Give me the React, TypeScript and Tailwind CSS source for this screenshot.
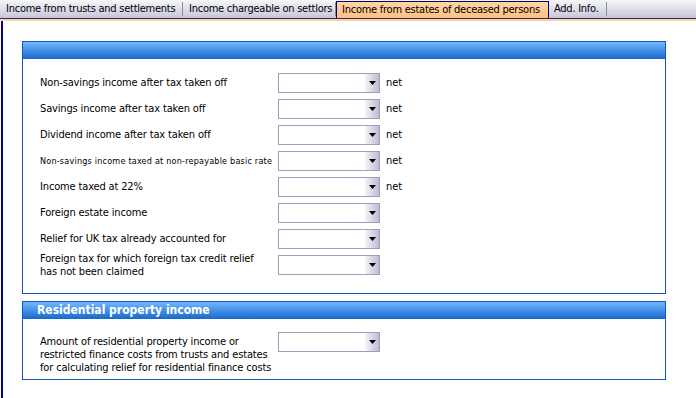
const font = { fontFamily: '"DejaVu Sans Condensed", "DejaVu Sans", sans-serif' };

function Combo() {
  return (
    <div className="flex h-[20px] w-[102px] shrink-0 border border-[#a09cbc] bg-white">
      <div className="flex-1" />
      <div className="flex w-[14px] items-center justify-center bg-gradient-to-r from-[#f4f4fa] to-[#bcbcd4]">
        <svg width="7" height="4" viewBox="0 0 7 4">
          <path d="M0 0h7L3.5 4z" fill="#000" />
        </svg>
      </div>
    </div>
  );
}

function Row({
  label,
  net,
  small,
  multi,
}: {
  label: React.ReactNode;
  net?: boolean;
  small?: boolean;
  multi?: boolean;
}) {
  let cls = "pt-[3px] text-[11px] leading-[13px] tracking-[-0.15px]";
  if (small) cls = "pt-[4px] text-[9px] leading-[12px] tracking-[0.2px]";
  if (multi) cls = "-mt-[3px] text-[11px] leading-[13px] tracking-[-0.15px]";
  return (
    <div className="flex items-start">
      <div className={"w-[238px] shrink-0 whitespace-nowrap text-black " + cls}>{label}</div>
      <Combo />
      {net && <span className="ml-[6px] pt-[3px] text-[11px] leading-[13px] text-black">net</span>}
    </div>
  );
}

function Header({ title }: { title?: string }) {
  return (
    <div className="h-[17px] bg-gradient-to-b from-[#70b8ff] to-[#1568cc] pl-[14px] text-[12px] font-bold leading-[17px] text-white">
      {title}
    </div>
  );
}

export default function App() {
  const tabs = [
    { label: "Income from trusts and settlements", w: "w-[183px]" },
    { label: "Income chargeable on settlors", w: "w-[153px]" },
  ];
  return (
    <div className="h-[398px] w-[696px] overflow-hidden bg-white" style={font}>
      <div className="flex h-[19px] whitespace-nowrap border-b border-[#2a2a70] bg-gradient-to-b from-[#f6f6fa] to-[#c6c6d8] text-[11px] tracking-[-0.25px] text-black">
        {tabs.map((t) => (
          <div key={t.label} className={"flex items-center " + t.w}>
            <span className="pl-[6px]">{t.label}</span>
            <span className="ml-auto h-[14px] w-px bg-[#8a8aa0]" />
          </div>
        ))}
        <div className="mt-px flex w-[213px] items-center border-x border-t border-[#000080] bg-gradient-to-b from-[#ffd6a6] to-[#ffbf80] pl-[5px]">
          Income from estates of deceased persons
        </div>
        <div className="flex w-[58px] items-center">
          <span className="pl-[5px]">Add. Info.</span>
          <span className="ml-auto h-[14px] w-px bg-[#8a8aa0]" />
        </div>
      </div>
      <div className="h-[2px] bg-[#ffd49a]" />
      <div className="ml-[1px] h-full border-l-2 border-[#000080] pl-[19px] pt-[20px]">
        <div className="w-[644px] border border-[#1458b4]">
          <Header />
          <div className="flex flex-col gap-[6px] pb-[15px] pl-[17px] pt-[14px]">
            <Row label="Non-savings income after tax taken off" net />
            <Row label="Savings income after tax taken off" net />
            <Row label="Dividend income after tax taken off" net />
            <Row label="Non-savings income taxed at non-repayable basic rate" net small />
            <Row label="Income taxed at 22%" net />
            <Row label="Foreign estate income" />
            <Row label="Relief for UK tax already accounted for" />
            <Row
              multi
              label={
                <>
                  Foreign tax for which foreign tax credit relief
                  <br />
                  has not been claimed
                </>
              }
            />
          </div>
        </div>
        <div className="mt-[7px] w-[644px] border border-[#1458b4]">
          <Header title="Residential property income" />
          <div className="pb-[5px] pl-[17px] pt-[13px]">
            <Row
              label={
                <>
                  Amount of residential property income or
                  <br />
                  restricted finance costs from trusts and estates
                  <br />
                  for calculating relief for residential finance costs
                </>
              }
            />
          </div>
        </div>
      </div>
    </div>
  );
}
